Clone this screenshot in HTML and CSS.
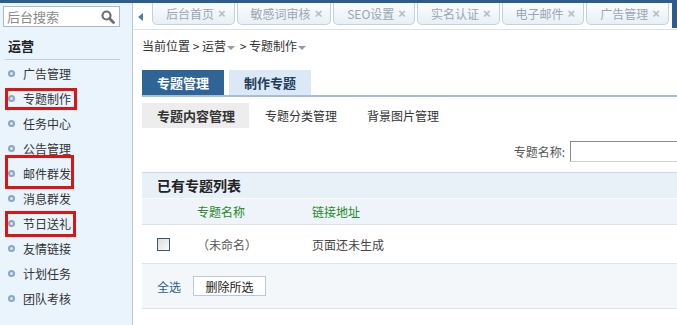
FILE: index.html
```html
<!DOCTYPE html>
<html>
<head>
    <link rel="stylesheet" href="styles.css">
</head>
<body>
    <div class="topband"></div>
    <div class="app">
        <div class="sidebar">
            <div class="search">
                <span>后台搜索</span>
                <svg width="14" height="14" viewBox="0 0 14 14">
                    <circle cx="5.5" cy="5.5" r="4" fill="none" stroke="#6f6f6f" stroke-width="2.2"/>
                    <line x1="8.5" y1="8.5" x2="12.5" y2="12.5" stroke="#6f6f6f" stroke-width="2.8" stroke-linecap="round"/>
                </svg>
            </div>
            <div class="menu-title">运营</div>
            <ul class="menu">
                <li><i class="dot"></i>广告管理</li>
                <li><i class="dot"></i>专题制作<span class="mark mark-a"></span></li>
                <li><i class="dot"></i>任务中心</li>
                <li><i class="dot"></i>公告管理</li>
                <li><i class="dot"></i>邮件群发<span class="mark mark-b"></span></li>
                <li><i class="dot"></i>消息群发</li>
                <li><i class="dot"></i>节日送礼<span class="mark mark-c"></span></li>
                <li><i class="dot"></i>友情链接</li>
                <li><i class="dot"></i>计划任务</li>
                <li><i class="dot"></i>团队考核</li>
            </ul>
        </div>

        <div class="main">
            <div class="tabbar">
                <div class="tab-prev"><i></i></div>
                <div class="tab">后台首页<b>×</b></div>
                <div class="tab">敏感词审核<b>×</b></div>
                <div class="tab">SEO设置<b>×</b></div>
                <div class="tab">实名认证<b>×</b></div>
                <div class="tab">电子邮件<b>×</b></div>
                <div class="tab">广告管理<b>×</b></div>
                <div class="tab-next"></div>
            </div>

            <div class="content">
                <div class="crumb">
                    当前位置 &gt; 运营<i class="caret"></i> &gt; 专题制作<i class="caret"></i>
                </div>

                <div class="main-tabs">
                    <div class="mtab active">专题管理</div>
                    <div class="mtab">制作专题</div>
                </div>

                <div class="sub-tabs">
                    <div class="stab active">专题内容管理</div>
                    <div class="stab">专题分类管理</div>
                    <div class="stab">背景图片管理</div>
                </div>

                <div class="filter">
                    <span>专题名称:</span>
                    <input type="text" class="filter-input">
                </div>

                <div class="list">
                    <div class="list-head">已有专题列表</div>
                    <div class="grid col-head">
                        <span></span>
                        <span>专题名称</span>
                        <span>链接地址</span>
                    </div>
                    <div class="grid row">
                        <span><i class="check"></i></span>
                        <span class="muted">（未命名）</span>
                        <span>页面还未生成</span>
                    </div>
                    <div class="foot">
                        <span class="select-all">全选</span>
                        <button class="btn">删除所选</button>
                    </div>
                </div>
            </div>
        </div>
    </div>
</body>
</html>
```

FILE: styles.css
```css
* {
    box-sizing: border-box;
}

body {
    margin: 0;
    width: 677px;
    height: 325px;
    overflow: hidden;
    font-family: "Noto Sans CJK SC", "Noto Sans", sans-serif;
    font-size: 12px;
    color: #333;
    background: #fff;
}

.topband {
    height: 3px;
    background: #2c5d8f;
}

.app {
    display: flex;
    height: 322px;
}

/* sidebar */
.sidebar {
    position: relative;
    flex: none;
    width: 133px;
    background: #eaf4fd;
    border-right: 1px solid #b3c9de;
}

.search {
    display: flex;
    align-items: center;
    justify-content: space-between;
    width: 117px;
    height: 21px;
    margin: 3px 0 0 3px;
    padding: 0 4px 0 3px;
    background: #fff;
    border: 1px solid #a7b9ca;
}

.search span {
    color: #8a8a8a;
    font-size: 13px;
}

.menu-title {
    height: 27px;
    margin: 6px 12px 0 5px;
    padding-left: 3px;
    line-height: 26px;
    font-size: 13px;
    font-weight: bold;
    color: #222;
    border-bottom: 1px solid #c4d2dd;
}

.menu {
    list-style: none;
    margin: 1px 0 0;
    padding: 0;
}

.menu li {
    position: relative;
    display: flex;
    align-items: center;
    gap: 8px;
    height: 25px;
    padding-left: 8px;
    color: #333;
}

.dot {
    width: 7px;
    height: 7px;
    border: 2px solid #86a7c6;
    border-radius: 50%;
    background: #dbe8f4;
}

.mark {
    position: absolute;
    left: 5px;
    border: 3px solid #e01313;
}

.mark-a { top: 2px; width: 72px; height: 22px; }
.mark-b { top: -6px; width: 69px; height: 34px; }
.mark-c { top: 0; width: 71px; height: 26px; }

/* main */
.main {
    flex: 1;
    min-width: 0;
    overflow: hidden;
}

.tabbar {
    position: relative;
    display: flex;
    gap: 2px;
    height: 27px;
    border-bottom: 1px solid #d6e2ec;
}

.tab-prev {
    flex: none;
    width: 17px;
    padding: 10px 0 0 5px;
}

.tab-prev i {
    display: block;
    width: 0;
    height: 0;
    border-right: 5px solid #4d7db0;
    border-top: 4px solid transparent;
    border-bottom: 4px solid transparent;
}

.tab {
    flex: none;
    display: flex;
    align-items: center;
    gap: 4px;
    height: 22px;
    padding: 0 8px 0 13px;
    color: #9aa6b1;
    background: linear-gradient(#fbfdfe, #e8eff6);
    border: 1px solid #c3d2e0;
    border-top: none;
    border-radius: 0 0 5px 5px;
}

.tab b {
    font-family: "Liberation Sans", Arial, sans-serif;
    font-size: 13px;
    color: #b3bcc5;
}

.tab-next {
    position: absolute;
    right: 0;
    top: -3px;
    width: 5px;
    height: 28px;
    background: #2c5d8f;
}

.content {
    width: 640px;
    padding: 6px 0 0 9px;
}

.crumb {
    height: 20px;
    line-height: 20px;
    color: #333;
}

.caret {
    display: inline-block;
    margin: 0 2px 1px 1px;
    border-top: 4px solid #999;
    border-left: 4px solid transparent;
    border-right: 4px solid transparent;
}

.main-tabs {
    display: flex;
    gap: 5px;
    margin-top: 14px;
    border-bottom: 2px solid #a3bfd9;
}

.mtab {
    width: 82px;
    height: 25px;
    line-height: 25px;
    text-align: center;
    font-size: 13px;
    font-weight: bold;
    color: #1d3d5e;
    background: #dbe8f5;
}

.mtab.active {
    color: #fff;
    background: #2f6497;
}

.sub-tabs {
    display: flex;
    margin-top: 6px;
}

.stab {
    height: 25px;
    line-height: 25px;
    padding: 0 15px;
    color: #333;
}

.stab.active {
    padding: 0 14px 0 15px;
    margin-right: 1px;
    font-size: 13px;
    font-weight: bold;
    background: #ededed;
}

.filter {
    display: flex;
    align-items: center;
    justify-content: flex-end;
    gap: 5px;
    height: 20px;
    margin-top: 13px;
    padding-right: 53px;
    color: #555;
}

.filter-input {
    width: 150px;
    height: 21px;
    border: 1px solid #cfcfcf;
    border-top-color: #8a8a8a;
    border-left-color: #8a8a8a;
}

.list {
    margin-top: 11px;
}

.list-head {
    height: 26px;
    line-height: 25px;
    padding-left: 15px;
    font-size: 14px;
    font-weight: bold;
    color: #222;
    background: #e8f0f8;
    border-top: 1px solid #c9d8e6;
}

.grid {
    display: grid;
    grid-template-columns: 55px 115px 1fr;
    align-items: center;
}

.col-head {
    height: 27px;
    color: #1f8a1f;
    background: #eef4fa;
    border-top: 1px solid #fafcfe;
    border-bottom: 1px solid #d8e3ed;
}

.row {
    height: 39px;
    color: #444;
    border-bottom: 1px solid #dbe5ee;
}

.muted {
    color: #555;
}

.check {
    display: block;
    width: 13px;
    height: 13px;
    margin-left: 15px;
    border: 1px solid #3b5873;
    background: linear-gradient(135deg, #dcdcdc, #fbfbfb);
}

.foot {
    display: flex;
    align-items: center;
    gap: 12px;
    height: 45px;
    padding-left: 15px;
    background: #f4f7fa;
    border-bottom: 1px solid #dbe5ee;
}

.select-all {
    color: #2b5f93;
}

.btn {
    width: 73px;
    height: 20px;
    padding: 0;
    font-family: inherit;
    font-size: 12px;
    color: #222;
    background: #fff;
    border: 1px solid #b9c9d8;
}
```
